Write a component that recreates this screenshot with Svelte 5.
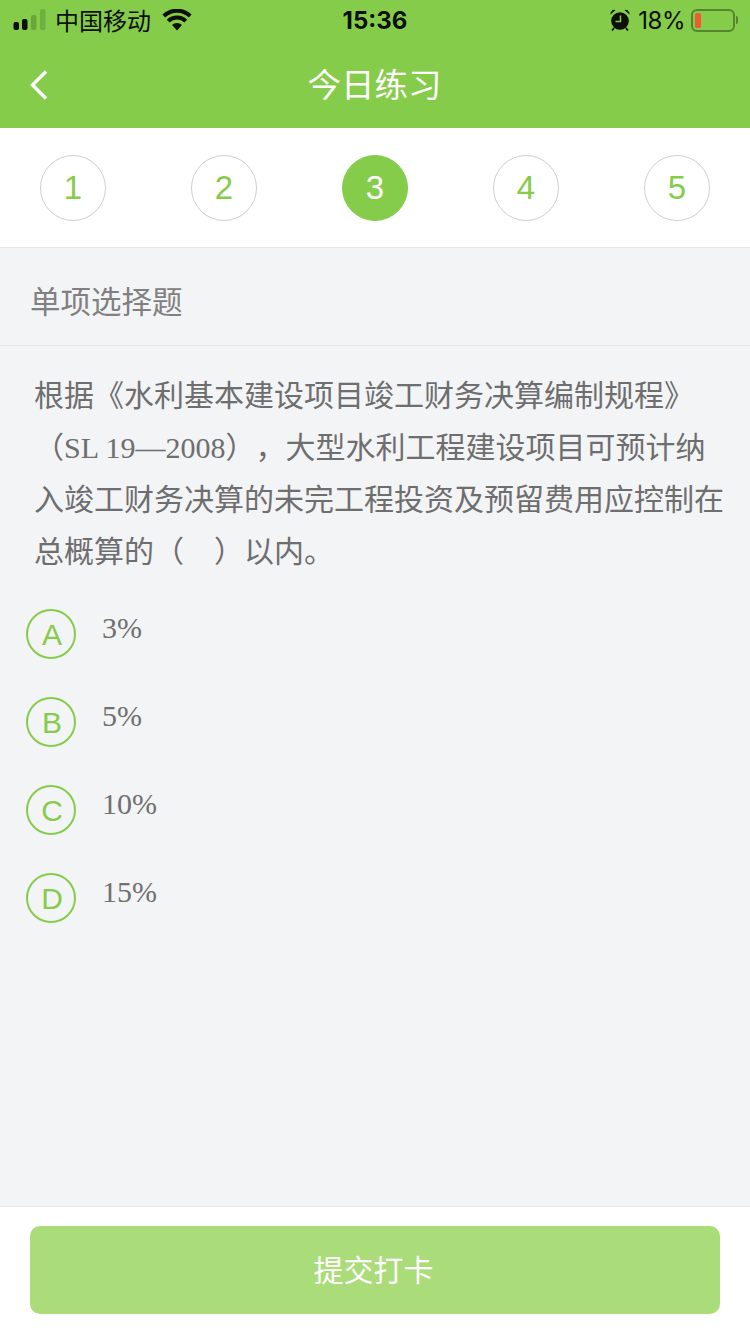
<script lang="ts">
  const steps = [1, 2, 3, 4, 5]
  const current = 3
  const options = [
    { key: 'A', text: '3%' },
    { key: 'B', text: '5%' },
    { key: 'C', text: '10%' },
    { key: 'D', text: '15%' }
  ]
</script>

<div class="page">
  <header class="head">
    <div class="status">
      <div class="status-left">
        <svg class="signal" width="34" height="22" viewBox="0 0 34 22">
          <rect x="0.500" y="13" width="5.500" height="8" rx="2" fill="#0b0f05" />
          <rect x="9" y="10" width="5.500" height="11" rx="2" fill="#0b0f05" />
          <rect x="18" y="6" width="5.500" height="15" rx="2" fill="#6aa63c" />
          <rect x="27" y="0" width="5.500" height="21" rx="2" fill="#6fb040" />
        </svg>
        <span class="carrier">中国移动</span>
        <svg class="wifi" width="30" height="22" viewBox="0 0 30 22">
          <path d="M15 21.500l-5-5.400a7 7 0 0 1 10 0z" fill="#0b0f05" />
          <path d="M6.200 12.200a12.500 12.500 0 0 1 17.600 0M1.800 7a19 19 0 0 1 26.400 0" fill="none" stroke="#0b0f05" stroke-width="4" />
        </svg>
      </div>
      <span class="clock">15:36</span>
      <div class="status-right">
        <svg class="alarm" width="20" height="22" viewBox="0 0 20 22">
          <circle cx="10" cy="12" r="8.800" fill="#0b0f05" />
          <path d="M10.500 6.500v6H5.500" fill="none" stroke="#86cc4b" stroke-width="1.500" />
          <path d="M0.500 5.500a4 4 0 0 1 5-4.500zM19.500 5.500a4 4 0 0 0-5-4.500z" fill="#0b0f05" />
          <path d="M4 19l-2 2.500M16 19l2 2.500" stroke="#0b0f05" stroke-width="1.800" />
        </svg>
        <span class="percent">18%</span>
        <div class="battery">
          <div class="battery-level"></div>
        </div>
        <div class="battery-cap"></div>
      </div>
    </div>
    <div class="nav">
      <svg class="back" width="20" height="32" viewBox="0 0 20 32">
        <path d="M17 2.500L3.500 16 17 29.500" fill="none" stroke="#fff" stroke-width="3.400" />
      </svg>
      <h1>今日练习</h1>
    </div>
  </header>

  <div class="steps">
    {#each steps as n}
      <div class="step" class:active={n === current}>{n}</div>
    {/each}
  </div>

  <main class="body">
    <div class="type">单项选择题</div>
    <div class="question">
      根据《水利基本建设项目竣工财务决算编制规程》（<span class="latin">SL 19—2008</span>），大型水利工程建设项目可预计纳入竣工财务决算的未完工程投资及预留费用应控制在总概算的（　）以内。
    </div>
    <ul class="options">
      {#each options as opt}
        <li class="option">
          <span class="badge">{opt.key}</span>
          <span class="opt-text">{opt.text}</span>
        </li>
      {/each}
    </ul>
  </main>

  <footer class="foot">
    <button class="submit">提交打卡</button>
  </footer>
</div>

<style>
  :global(body) {
    margin: 0;
  }

  .page {
    width: 750px;
    height: 1334px;
    display: flex;
    flex-direction: column;
    background: #f3f4f6;
    font-family: "Liberation Sans", "Noto Sans CJK SC", sans-serif;
    text-spacing-trim: space-all;
    overflow: hidden;
  }

  .head {
    height: 128px;
    background: #86cc4b;
    flex-shrink: 0;
  }

  .status {
    height: 40px;
    display: grid;
    grid-template-columns: 1fr auto 1fr;
    align-items: center;
    color: #0b0f05;
  }

  .status-left {
    display: flex;
    align-items: center;
    padding-left: 13px;
  }

  .signal {
    margin-right: 8px;
  }

  .carrier {
    font-size: 24px;
    margin-right: 11px;
    position: relative;
    top: -1px;
  }

  .clock {
    font-size: 24px;
    font-weight: 700;
    font-family: "Inter", "Liberation Sans", sans-serif;
  }

  .status-right {
    display: flex;
    align-items: center;
    justify-content: flex-end;
    padding-right: 12px;
  }

  .alarm {
    margin-right: 8px;
  }

  .percent {
    font-size: 24px;
    margin-right: 6px;
    letter-spacing: -0.5px;
    font-family: "Inter", "Liberation Sans", sans-serif;
  }

  .battery {
    width: 44px;
    height: 23px;
    box-sizing: border-box;
    border: 2px solid #55852f;
    border-radius: 6px;
    padding: 2px;
  }

  .battery-level {
    width: 6px;
    height: 100%;
    background: #ef5a32;
    border-radius: 2px;
  }

  .battery-cap {
    width: 2px;
    height: 8px;
    margin-left: 1px;
    background: #55852f;
    border-radius: 0 2px 2px 0;
  }

  .nav {
    height: 88px;
    display: flex;
    align-items: center;
    justify-content: center;
    position: relative;
    padding-bottom: 4px;
    box-sizing: border-box;
  }

  .back {
    position: absolute;
    left: 29px;
    top: 29px;
  }

  h1 {
    margin: 0 0 0 -1px;
    font-size: 33.500px;
    font-weight: 400;
    color: #fff;
  }

  .steps {
    height: 120px;
    flex-shrink: 0;
    box-sizing: border-box;
    padding: 0 40px;
    display: flex;
    align-items: center;
    justify-content: space-between;
    background: #fff;
    border-bottom: 1px solid #e6e6e6;
  }

  .step {
    width: 66px;
    height: 66px;
    box-sizing: border-box;
    border: 1px solid #cfcfcf;
    border-radius: 50%;
    display: flex;
    align-items: center;
    justify-content: center;
    font-size: 33px;
    color: #86cc4b;
  }

  .step.active {
    background: #86cc4b;
    border-color: #86cc4b;
    color: #fff;
  }

  .body {
    flex: 1;
    min-height: 0;
  }

  .type {
    height: 98px;
    box-sizing: border-box;
    padding: 6px 0 0 30px;
    display: flex;
    align-items: center;
    font-size: 30.500px;
    color: #808080;
    border-bottom: 1px solid #e8e9ec;
  }

  .question {
    padding: 24px 26px 0 34px;
    font-size: 30px;
    line-height: 52px;
    color: #6e6e6e;
  }

  .latin {
    font-family: "Liberation Serif", serif;
  }

  .options {
    list-style: none;
    margin: 0;
    padding: 31px 0 0 26px;
  }

  .option {
    height: 88px;
    display: flex;
    align-items: flex-start;
  }

  .badge {
    width: 50px;
    height: 50px;
    box-sizing: border-box;
    border: 2px solid #86cc4b;
    border-radius: 50%;
    display: flex;
    align-items: center;
    justify-content: center;
    padding: 2px 0 0 2px;
    font-size: 30px;
    color: #86cc4b;
    flex-shrink: 0;
  }

  .opt-text {
    margin-left: 26px;
    font-family: "Liberation Serif", serif;
    font-size: 30px;
    line-height: 38px;
    color: #707070;
  }

  .foot {
    height: 128px;
    flex-shrink: 0;
    box-sizing: border-box;
    padding: 19px 30px 0;
    background: #fff;
    border-top: 1px solid #e8e9ec;
  }

  .submit {
    width: 100%;
    height: 88px;
    border: 0;
    border-radius: 10px;
    padding: 0 3px 4px 0;
    background: #aadc79;
    color: #fff;
    font-family: inherit;
    font-size: 30px;
  }
</style>
